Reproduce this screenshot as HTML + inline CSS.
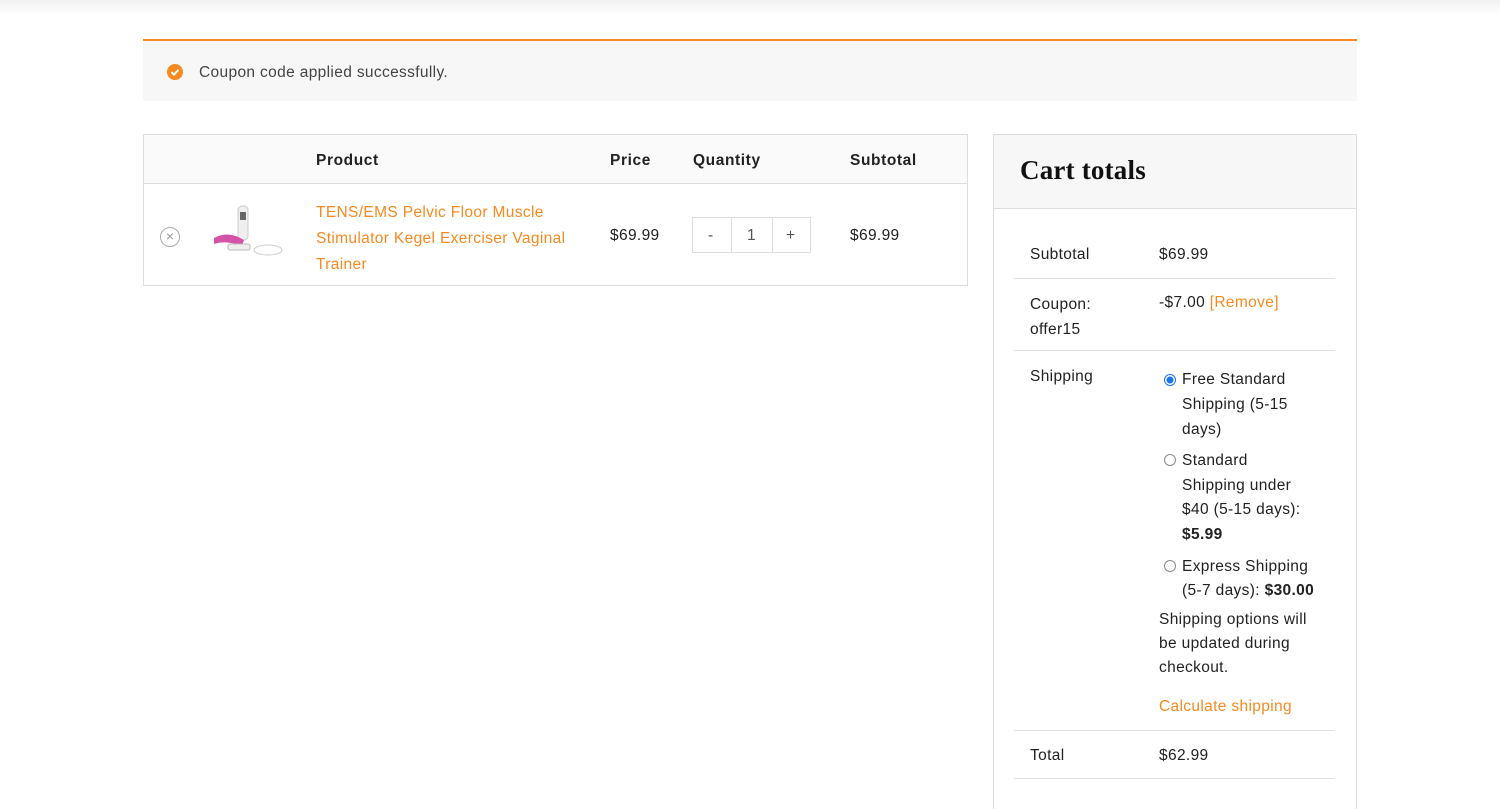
<!DOCTYPE html>
<html><head><meta charset="utf-8"><style>
*{margin:0;padding:0;box-sizing:border-box}
html,body{width:1500px;height:809px;overflow:hidden}
body{background:#fff;font-family:"Liberation Sans",sans-serif;font-size:15.5px;letter-spacing:0.35px;color:#222;position:relative}
.a{position:absolute;white-space:nowrap}
.o{color:#f6891f}
.b{font-weight:bold;letter-spacing:0.6px}
.ln{position:absolute;height:1px;background:#e2e2e2}
</style></head><body>
<div class="a" style="left:0;top:0;width:1500px;height:14px;background:linear-gradient(#f0f0f0,#fff)"></div>
<div class="a" style="left:143px;top:39px;width:1214px;height:62px;background:#f7f7f7;border-top:2px solid #f6891f"></div>
<div class="a" style="left:167px;top:64px;width:16px;height:16px;border-radius:50%;background:#f6891f"><svg width="16" height="16" style="display:block"><path d="M4.5 8.2l2.5 2.5 4.5-5" stroke="#fff" stroke-width="2" fill="none"/></svg></div>
<div class="a" style="left:199px;top:64px;color:#444">Coupon code applied successfully.</div>

<div class="a" style="left:143px;top:134px;width:825px;height:152px;border:1px solid #ddd"></div>
<div class="a" style="left:144px;top:135px;width:823px;height:49px;background:#fafafa;border-bottom:1px solid #ddd"></div>
<div class="a b" style="left:316px;top:152px">Product</div>
<div class="a b" style="left:610px;top:152px">Price</div>
<div class="a b" style="left:693px;top:152px">Quantity</div>
<div class="a b" style="left:850px;top:152px">Subtotal</div>
<div class="a" style="left:160px;top:227px;width:20px;height:20px;border:1px solid #aaa;border-radius:50%;color:#999;font-size:14px;line-height:17px;text-align:center;letter-spacing:0">×</div>
<svg class="a" style="left:208px;top:200px" width="80" height="62"><rect x="30" y="6" width="10" height="34" rx="4" fill="#f0eef0" stroke="#ccc"/><rect x="32" y="12" width="6" height="8" fill="#666"/><path d="M6 38 Q20 30 36 40 L34 46 Q18 40 6 44Z" fill="#d452a8"/><ellipse cx="60" cy="50" rx="14" ry="5" fill="none" stroke="#ccc"/><rect x="20" y="44" width="22" height="6" rx="2" fill="#eee" stroke="#bbb"/></svg>
<div class="a o" style="left:316px;top:200px;line-height:26px">TENS/EMS Pelvic Floor Muscle<br>Stimulator Kegel Exerciser Vaginal<br>Trainer</div>
<div class="a" style="left:610px;top:227px">$69.99</div>
<div class="a" style="left:692px;top:217px;width:119px;height:36px;border:1px solid #ddd"></div>
<div class="a" style="left:731px;top:217px;width:42px;height:36px;border-left:1px solid #ddd;border-right:1px solid #ddd"></div>
<div class="a" style="left:708px;top:227px;color:#555">-</div>
<div class="a" style="left:747px;top:227px;color:#555">1</div>
<div class="a" style="left:786px;top:227px;color:#555">+</div>
<div class="a" style="left:850px;top:227px">$69.99</div>

<div class="a" style="left:993px;top:134px;width:364px;height:700px;border:1px solid #ddd"></div>
<div class="a" style="left:994px;top:135px;width:362px;height:74px;background:#f7f7f7;border-bottom:1px solid #ddd"></div>
<div class="a b" style="left:1020px;top:155px;font-family:'Liberation Serif',serif;font-size:27px;color:#111;letter-spacing:0.2px">Cart totals</div>
<div class="a" style="left:1030px;top:246px">Subtotal</div>
<div class="a" style="left:1159px;top:246px">$69.99</div>
<div class="ln" style="left:1014px;top:278px;width:321px"></div>
<div class="a" style="left:1030px;top:292px;line-height:25px">Coupon:<br>offer15</div>
<div class="a" style="left:1159px;top:294px">-$7.00 <span class="o">[Remove]</span></div>
<div class="ln" style="left:1014px;top:350px;width:321px"></div>
<div class="a" style="left:1030px;top:368px">Shipping</div>
<div class="a" style="left:1164px;top:374px;width:12px;height:12px;border-radius:50%;border:1px solid #1a73e8;background:radial-gradient(#1a73e8 3px,#fff 4px)"></div>
<div class="a" style="left:1182px;top:367px;line-height:25px">Free Standard<br>Shipping (5-15<br>days)</div>
<div class="a" style="left:1164px;top:454px;width:12px;height:12px;border-radius:50%;border:1px solid #888"></div>
<div class="a" style="left:1182px;top:449px;line-height:24.5px">Standard<br>Shipping under<br>$40 (5-15 days):<br><b>$5.99</b></div>
<div class="a" style="left:1164px;top:560px;width:12px;height:12px;border-radius:50%;border:1px solid #888"></div>
<div class="a" style="left:1182px;top:555px;line-height:24px">Express Shipping<br>(5-7 days): <b>$30.00</b></div>
<div class="a" style="left:1159px;top:608px;line-height:24px">Shipping options will<br>be updated during<br>checkout.</div>
<div class="a o" style="left:1159px;top:698px">Calculate shipping</div>
<div class="ln" style="left:1014px;top:730px;width:321px"></div>
<div class="a" style="left:1030px;top:747px">Total</div>
<div class="a" style="left:1159px;top:747px">$62.99</div>
<div class="ln" style="left:1014px;top:778px;width:321px"></div>
</body></html>
